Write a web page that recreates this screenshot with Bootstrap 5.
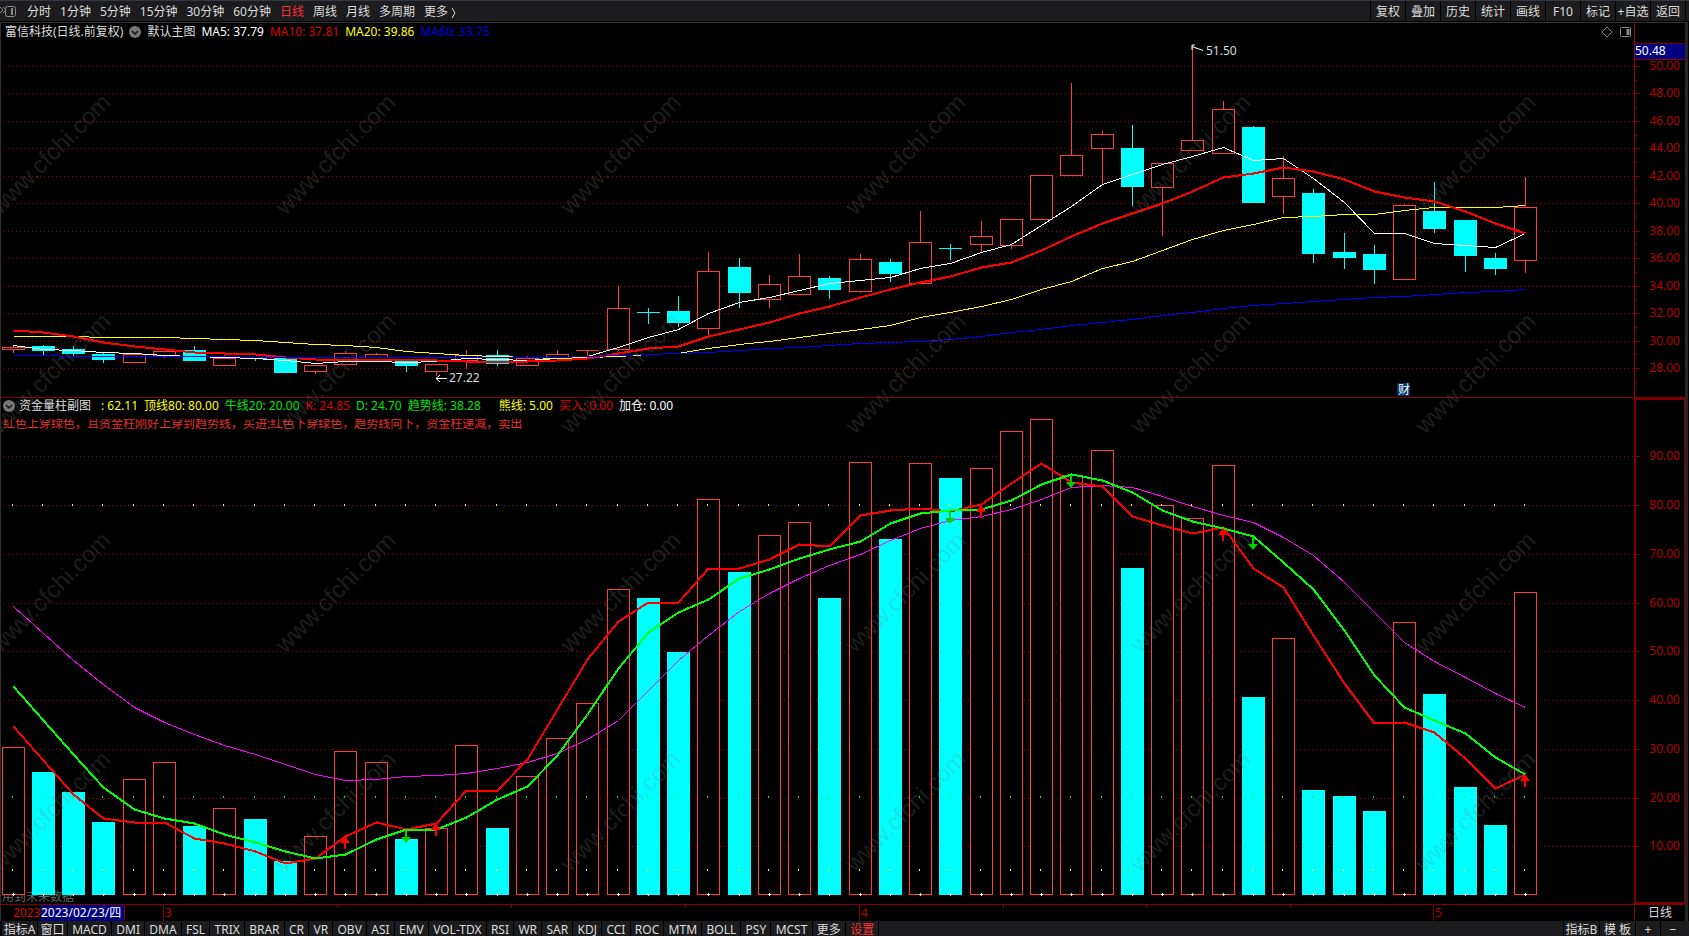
<!DOCTYPE html>
<html lang="zh-CN">
<head>
<meta charset="utf-8">
<meta name="viewport" content="width=device-width, initial-scale=1">
<title>富信科技 日线</title>
<link href="https://cdn.jsdelivr.net/npm/bootstrap@5.3.0/dist/css/bootstrap.min.css" rel="stylesheet">
<style>
:root{--bar:#1c1c1e;--axis:#800000;--up:#ff3c3c;--ink:#dcdcdc}
body{background:#000;color:var(--ink);font:12px/15px "Noto Sans","Noto Sans CJK SC",sans-serif;overflow:hidden}
button{font:inherit;color:inherit;background:none;border:0;padding:0;white-space:nowrap}
.topbar{background:var(--bar);height:22px;border-top:1px solid #313842;border-bottom:1px solid #000;line-height:22px}
.periods{gap:9px;margin-left:10px}
.tools button{width:35px;border-left:1px solid #000}
.tools{border-right:1px solid #000;margin-right:3px}
.hot{color:#ff3232}
.frame{border-left:1px solid #303030;border-right:3px solid #262626;margin-right:1px}
.pane-main{flex:375 1 0;border-top:1px solid #333}
.pane-sub{flex:507 1 0;border-top:1px solid var(--axis)}
.pane-main,.pane-sub{min-height:0}
.legend-row{line-height:16px;white-space:nowrap;gap:6px}
.pane-main .legend-row{line-height:18px}
.knob{width:12px;height:12px;display:block}
.sub-name{gap:4px;margin-left:2px}
.c-r{color:#dc0000}.c-y{color:#ff0}.c-b{color:#0000e6}.c-g{color:#00e600}.c-w{color:#fff}
.note{height:10px;line-height:10px;overflow:hidden;color:#e62e2e;margin:5px 0 0 2px;white-space:nowrap}
.timeline{height:17px;border-top:1px solid var(--axis)}
.timeline .tick,.timeline .month{top:0;border-left:1px solid var(--axis)}
.timeline .tick{height:3px}
.timeline .month{height:16px;padding-left:1px;color:#b40000}
.day{background:#000080;color:#fff;left:40px;width:84px;height:16px;border-right:1px solid var(--axis);white-space:nowrap}
.unit{width:51px;border-left:1px solid var(--axis)}
.bottombar{background:var(--bar);height:15px;line-height:17px;margin-left:2px}
.bottombar button{padding:0 4px;border-right:1px solid #000;height:15px}
.bottombar .tight{padding:0 1px}
.tabs-row{flex:0 0 52%}
.tabs-row button{flex:1 0 auto}
.tabs-row .tight{flex:0 0 36px}
.tabs-row .pair{flex:0 0 30px;padding:0 2px}
.ends button{border-left:1px solid #000;border-right:0}
.ends .w-a{width:36px}.ends .w-b{width:25px}
svg text{font-family:"Noto Sans","Noto Sans CJK SC",sans-serif;font-size:12px}
svg .wm{font-family:"Liberation Sans",sans-serif;font-size:24px}
</style>
<script src="https://cdn.jsdelivr.net/npm/bootstrap@5.3.0/dist/js/bootstrap.bundle.min.js"></script>
</head>
<body>
<div class="vh-100 d-flex flex-column">
  <header class="topbar d-flex flex-shrink-0">
    <svg width="17" height="20" fill="none" stroke="#8a8a8a" aria-hidden="true"><path d="M0 6l3 3-3 3M3 6l3 3-3 3"/><rect x="5.500" y="5.500" width="10" height="10" rx="2"/><path d="M12 7v7" stroke-width="2"/></svg>
    <nav class="periods d-flex" aria-label="周期">
      <button>分时</button><button>1分钟</button><button>5分钟</button><button>15分钟</button><button>30分钟</button><button>60分钟</button><button class="hot">日线</button><button>周线</button><button>月线</button><button>多周期</button><button>更多 <svg width="6" height="11" fill="none" stroke="#dcdcdc" aria-hidden="true"><path d="M1 1l3 5-3 5"/></svg></button>
    </nav>
    <div class="tools d-flex ms-auto">
      <button>复权</button><button>叠加</button><button>历史</button><button>统计</button><button>画线</button><button>F10</button><button>标记</button><button>+自选</button><button>返回</button>
    </div>
  </header>

  <main class="frame d-flex flex-column flex-grow-1 position-relative" id="frame">
    <section class="pane-main position-relative">
      <svg class="position-absolute top-0 start-0 w-100 h-100" id="mainChart" role="img" aria-label="K线图"></svg>
      <div class="legend-row d-flex align-items-center position-relative ps-1">
        <span>富信科技(日线.前复权)</span>
        <svg class="knob" viewBox="0 0 12 12" aria-hidden="true"><circle cx="6" cy="6" r="6" fill="#777"/><path d="M3 5l3 3 3-3" fill="none" stroke="#111" stroke-width="1.500"/></svg>
        <span>默认主图</span><span class="c-w">MA5: 37.79</span><span class="c-r">MA10: 37.81</span><span class="c-y">MA20: 39.86</span><span class="c-b">MA60: 33.75</span>
        <svg class="ms-auto me-5" width="45" height="16" fill="none" stroke="#888" aria-hidden="true"><path d="M15 3l5 5-5 5-5-5z"/><rect x="28.500" y="3.500" width="10" height="9" rx="1"/><path d="M36 5v6" stroke-width="3"/></svg>
      </div>
    </section>
    <section class="pane-sub position-relative">
      <svg class="position-absolute top-0 start-0 w-100 h-100" id="subChart" role="img" aria-label="资金量柱副图"></svg>
      <div class="legend-row d-flex align-items-center position-relative">
        <span class="sub-name d-flex align-items-center"><svg class="knob" viewBox="0 0 12 12" aria-hidden="true"><circle cx="6" cy="6" r="6" fill="#777"/><path d="M3 5l3 3 3-3" fill="none" stroke="#111" stroke-width="1.500"/></svg>资金量柱副图</span>
        <span class="c-y ps-1">: 62.11</span><span class="c-y">顶线80: 80.00</span><span class="c-g">牛线20: 20.00</span><span class="c-r">K: 24.85</span><span class="c-g">D: 24.70</span><span class="c-g">趋势线: 38.28</span><span class="c-y ps-2 ms-1">熊线: 5.00</span><span class="c-r">买入: 0.00</span><span class="c-w">加仓: 0.00</span>
      </div>
      <div class="note position-relative">红色上穿绿色，且资金柱刚好上穿到趋势线，买进;红色下穿绿色，趋势线向下，资金柱递减，卖出</div>
    </section>
    <svg class="position-absolute top-0 start-0 w-100 h-100 pe-none" id="marks" aria-hidden="true"></svg>
    <div class="timeline d-flex flex-shrink-0">
      <div class="flex-grow-1 position-relative overflow-hidden" id="months">
        <span class="position-absolute c-r" style="left:12px">2023</span>
        <span class="day position-absolute top-0">2023/02/23/四</span>
      </div>
      <div class="unit text-center">日线</div>
    </div>
  </main>

  <footer class="bottombar d-flex flex-shrink-0">
    <div class="tabs-row d-flex"><button class="tight">指标A</button><button class="pair">窗口</button><button>MACD</button><button>DMI</button><button>DMA</button><button>FSL</button><button>TRIX</button><button>BRAR</button><button>CR</button><button>VR</button><button>OBV</button><button>ASI</button><button>EMV</button><button>VOL-TDX</button><button>RSI</button><button>WR</button><button>SAR</button><button>KDJ</button><button>CCI</button><button>ROC</button><button>MTM</button><button>BOLL</button><button>PSY</button><button>MCST</button><button>更多</button><button class="hot">设置</button></div>
    <div class="ends d-flex ms-auto me-1"><button class="tight w-a">指标B</button><button class="tight w-a">模 板</button><button class="w-b">+</button><button class="w-b">−</button></div>
  </footer>
</div>

<script>
// One row per day: [high, body top, body bottom, low, rising]
const candles=[[345,347,349,353,1],[345,346,351,355,0],[346,349,354,356,0],[353,354,360,363,0],[354,354,362,363,1],[351,351,355,358,1],[346,350,361,361,0],[355,358,365,365,1],[357,357,359,361,0],[358,358,373,373,0],
[365,365,371,374,1],[351,353,364,364,1],[353,354,357,357,1],[360,360,366,372,0],[364,364,371,376,1],[350,355,360,369,1],[350,355,364,366,0],[356,358,365,365,1],[350,354,360,360,1],[350,350,350,356,1],
[286,308,349,351,1],[308,312,312,324,0],[296,311,323,327,0],[252,271,328,336,1],[258,267,293,308,0],[275,284,299,308,1],[254,276,294,294,1],[276,278,290,299,0],[254,259,291,293,1],[259,262,274,282,0],
[211,242,283,283,1],[244,248,248,260,0],[221,236,244,252,1],[219,219,245,249,1],[175,175,219,219,1],[83,155,175,175,1],[131,134,148,185,1],[125,148,187,206,0],[163,163,187,236,1],[47,140,150,150,1],
[101,109,153,153,1],[126,127,203,203,0],[156,178,196,214,1],[189,193,254,263,0],[233,252,258,269,0],[245,254,270,284,0],[204,205,279,279,1],[182,211,229,233,0],[220,220,256,272,0],[253,258,269,275,0],[177,207,260,273,1]];
const ma5=[345,349,350,352,353,355,356,357,358,360,363,361,361,362,361,358,359,360,358,356,347,337,329,313,302,297,290,283,280,277,268,263,252,244,225,206,184,174,164,156,147,160,158,178,202,233,233,243,245,247,233];
const ma10=[330,332,336,342,346,349,352,353,354,357,359,359,359,359,360,361,361,361,360,358,353,348,346,336,329,322,313,306,297,289,282,276,267,262,250,236,223,213,203,191,177,173,167,171,179,191,197,201,211,223,233];
const ma20=[336,336,336,337,337,337,338,339,340,342,344,345,347,351,353,355,356,357,358,357,356,354,353,348,344,341,337,333,329,325,317,312,306,299,289,281,268,261,250,239,230,224,217,216,214,214,210,207,207,207,205];
const ma60=[355,355,356,356,356,356,356,356,357,357,357,357,357,357,357,357,357,357,357,356,355,354,353,352,350,348,347,345,343,342,341,339,336,332,329,325,322,319,315,312,308,305,303,301,299,297,296,294,292,291,289];
// Fund bars: [top, rising]
const bars=[[747,1],[772,0],[792,0],[822,0],[779,1],[762,1],[826,0],[808,1],[819,0],[861,0],[836,1],[751,1],[762,1],[839,0],[828,1],[745,1],[828,0],[776,1],[738,1],[703,1],[589,1],[598,0],[652,0],[499,1],[572,0],[535,1],[522,1],[598,0],[462,1],[539,0],[463,1],[478,0],[468,1],[431,1],[419,1],[475,1],[450,1],[568,0],[505,1],[518,1],[465,1],[697,0],[638,1],[790,0],[796,0],[811,0],[622,1],[694,0],[787,0],[825,0],[592,1]];
const kLine=[726,760,794,818,822,822,838,843,851,863,858,836,822,829,823,790,790,759,709,659,621,602,602,568,568,559,544,546,515,510,508,511,504,483,463,482,486,516,525,533,527,568,587,635,683,723,722,732,758,788,774];
const dLine=[686,720,754,787,809,818,823,834,842,851,858,854,839,829,829,817,799,786,755,714,668,632,612,599,578,569,558,549,541,523,513,510,509,500,484,474,480,492,510,521,528,536,562,589,630,675,707,720,733,757,774];
const trend=[606,633,660,684,707,722,734,745,754,764,774,780,779,776,775,773,768,762,753,739,720,690,660,635,611,593,578,565,554,540,528,520,516,509,499,487,485,487,496,506,515,522,537,555,582,612,642,661,677,693,707];
const buys=[[11,836],[14,823],[32,505],[40,528],[50,774]], sells=[[13,830],[31,511],[35,475],[41,537]];

const PLOT=1633, AXIS=51, R=Math.round;
function pane(id,top,span){
  const el=document.getElementById(id), w=el.clientWidth, h=el.clientHeight, pw=w-AXIS;
  const out=[];
  const p={el,w,h,pw,out,
    x:v=>R((v-1)*pw/PLOT), y:v=>R((v-top)*h/span), day:i=>R((11.6+30.25*i)*pw/PLOT), half:R(11*pw/PLOT),
    rect:(x,y,W,H,f,s)=>out.push(`<rect x="${x}" y="${y}" width="${W}" height="${H}" fill="${f}"${s?` stroke="${s}" transform="translate(.5 .5)"`:''}/>`),
    path:(d,c,sw=1,extra='')=>out.push(`<path d="${d}" fill="none" stroke="${c}" stroke-width="${sw}" ${extra}/>`),
    text:(x,y,s,c,a='start')=>out.push(`<text x="${x}" y="${y}" fill="${c}" text-anchor="${a}">${s}</text>`)};
  p.line=(a,c,sw)=>p.path('M'+a.map((v,i)=>(p.day(i)+.5)+' '+(p.y(v)+.5)).join('L'),c,sw,'shape-rendering="crispEdges" stroke-linejoin="round"');
  p.grid=(from,to,step,fn)=>{for(let v=from;step<0?v>=to:v<=to;v+=step){const y=p.y(fn(v));
    p.path(`M3 ${y+.5}H${pw}`,'#960000',1,'stroke-dasharray="1 3"');
    p.path(`M${pw} ${y+.5}h6`,'#800000');
    const m=p.y(fn(v+step/2)); p.path(`M${pw} ${m+.5}h3`,'#800000');
    p.text(w-5,y+4,v.toFixed(2),'#b40000','end');}};
  return p;
}
function drawMain(){
  const p=pane('mainChart',23,374);
  p.grid(50,28,-2,v=>66+(50-v)*13.73);
  candles.forEach(([hi,t,b,lo,up],i)=>{const x=p.day(i),c=up?'#ff3c3c':'#0ff',T=p.y(t),B=p.y(b);
    if(p.y(hi)<T)p.rect(x,p.y(hi),1,T-p.y(hi),c);
    if(p.y(lo)>B)p.rect(x,B,1,p.y(lo)-B,c);
    if(t===b)p.rect(x-p.half,T,p.half*2+1,1,c);
    else if(up)p.rect(x-p.half,T,p.half*2,B-T,'#000',c);
    else p.rect(x-p.half,T,p.half*2+1,B-T,c);});
  p.line(ma5,'#fff',1);p.line(ma20,'#ff0',1);p.line(ma10,'#f00',2);p.line(ma60,'#00f',1);
  let x=p.day(39),y=p.y(46);
  p.path(`M${x+3} ${y-1}h-3v5M${x} ${y+.5}l11 4`,'#fff');p.text(x+14,p.y(55),'51.50','#dcdcdc');
  x=p.day(14);y=p.y(378);
  p.path(`M${x} ${y+.5}h11M${x+4} ${y-3}l-4 3.500 4 3.500`,'#fff');p.text(x+13,y+4,'27.22','#dcdcdc');
  x=p.x(1398);y=p.y(383);
  p.rect(x-1,y,13,13,'#003264');p.out.push(`<text x="${x}" y="${y+11}" fill="#fff">财</text>`);
  p.rect(p.pw,0,1,p.h,'#960000');
  p.rect(p.pw+1,p.y(43),AXIS,17,'#000080');p.rect(p.pw,p.y(43),AXIS,1,'#800000');p.rect(p.pw,p.y(59),AXIS,1,'#800000');
  p.text(p.pw+1,p.y(51)+4,'50.48','#fff');
  p.el.innerHTML=p.out.join('');
}
function drawSub(){
  const p=pane('subChart',398,506), base=p.y(894);
  p.grid(90,10,-10,v=>895-4.875*v);
  p.text(1,p.y(901),'用到未来数据','#666');
  bars.forEach(([t,up],i)=>{const x=p.day(i)-p.half,T=p.y(t);
    up?p.rect(x,T,p.half*2,base-T,'#000','#ff3c3c'):p.rect(x,T,p.half*2+1,base-T+1,'#0ff');});
  bars.forEach((_,i)=>{const x=p.day(i);
    p.rect(x-1,p.y(504),1,2,'#ff0');p.rect(x-1,p.y(796),1,2,'#0f0');p.rect(x-1,p.y(869),1,2,'#ff0');
    p.rect(x-1,base,3,1,'#fff');p.rect(x,base-1,1,3,'#fff');});
  p.line(trend,'#f0f',1);p.line(kLine,'#f00',2);p.line(dLine,'#0f0',2);
  buys.forEach(([i,v])=>{const x=p.day(i),y=p.y(v);p.out.push(`<path d="M${x} ${y}l5 7h-4v6h-2v-6h-4z" fill="#f00"/>`)});
  sells.forEach(([i,v])=>{const x=p.day(i),y=p.y(v);p.out.push(`<path d="M${x-1} ${y}h2v7h4l-5 6-5-6h4z" fill="#00d200"/>`)});
  p.path(`M${p.w} 1H${p.pw+1}V${p.h-1}H${p.w}`,'#800000',2);p.rect(p.w-1,0,1,p.h,'#800000');
  p.el.innerHTML=p.out.join('');
}
function drawMarks(){
  const el=document.getElementById('marks');let s='';
  for(let y=194;y<el.clientHeight;y+=219)for(let x=0;x<el.clientWidth-AXIS;x+=285)
    s+=`<text class="wm" fill="#808080" fill-opacity=".24" transform="translate(${x-1} ${y}) rotate(-45)">www.cfchi.com</text>`;
  el.innerHTML=s;
}
function drawMonths(){
  const box=document.getElementById('months');
  box.querySelectorAll('.tick,.month').forEach(e=>e.remove());
  [[337],[511],[685],[1003],[1146],[1290],[163,3],[859,4],[1433,5]].forEach(([x,m])=>{
    const e=document.createElement('span');e.className='position-absolute '+(m?'month':'tick');
    e.style.left=(x-1)/PLOT*100+'%';e.textContent=m||'';box.append(e);});
}
function draw(){drawMain();drawSub();drawMarks();drawMonths();}
addEventListener('resize',draw);draw();
</script>
</body>
</html>
